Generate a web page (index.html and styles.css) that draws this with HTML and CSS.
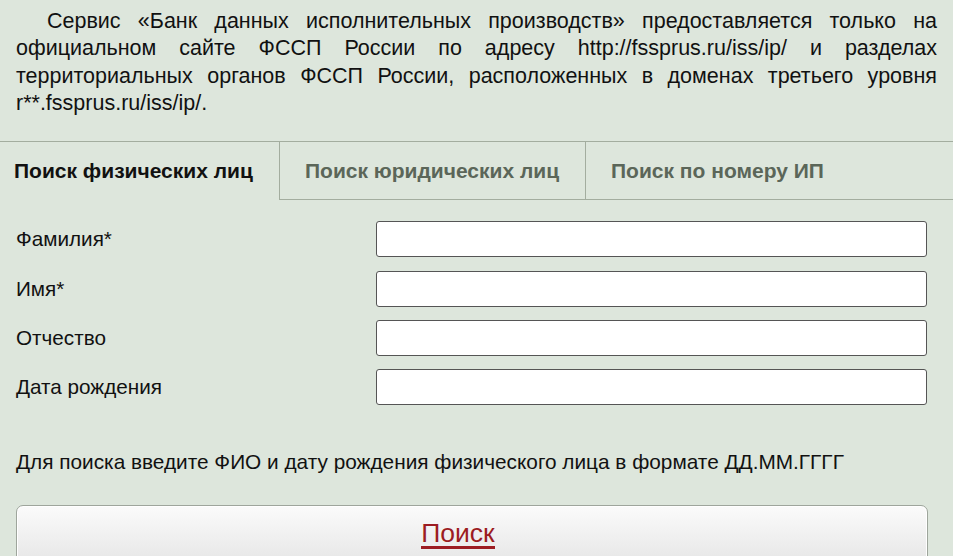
FILE: index.html
```html
<!DOCTYPE html>
<html lang="ru">
<head>
    <meta charset="UTF-8">
    <title>Банк данных исполнительных производств</title>
    <link rel="stylesheet" href="styles.css">
</head>
<body>
<div class="page">
    <p class="intro">Сервис «Банк данных исполнительных производств» предоставляется только на официальном сайте ФССП России по адресу http://fssprus.ru/iss/ip/ и разделах территориальных органов ФССП России, расположенных в доменах третьего уровня r**.fssprus.ru/iss/ip/.</p>

    <div class="tabs">
        <div class="tab active">Поиск физических лиц</div>
        <div class="tab">Поиск юридических лиц</div>
        <div class="tab last">Поиск по номеру ИП</div>
    </div>

    <form class="form" onsubmit="return false">
        <div class="row">
            <label for="lastName">Фамилия*</label>
            <input type="text" id="lastName">
        </div>
        <div class="row">
            <label for="firstName">Имя*</label>
            <input type="text" id="firstName">
        </div>
        <div class="row">
            <label for="middleName">Отчество</label>
            <input type="text" id="middleName">
        </div>
        <div class="row">
            <label for="birthDate">Дата рождения</label>
            <input type="text" id="birthDate">
        </div>

        <div class="hint">Для поиска введите ФИО и дату рождения физического лица в формате ДД.ММ.ГГГГ</div>

        <button class="submit"><span>Поиск</span></button>
    </form>
</div>
</body>
</html>
```

FILE: styles.css
```css
html, body {
    margin: 0;
    padding: 0;
}
body {
    font-family: "Liberation Sans", Arial, sans-serif;
    background-color: #dde6dc;
    color: #111;
    overflow: hidden;
    height: 556px;
}
.page {
    width: 953px;
}
.intro {
    margin: 0;
    padding: 8px 16px 0 16px;
    font-size: 21.5px;
    line-height: 27.3px;
    text-align: justify;
    text-indent: 31px;
}
.tabs {
    display: flex;
    margin-top: 24px;
    border-top: 1px solid #a3ad9f;
    height: 58px;
}
.tab {
    display: flex;
    align-items: center;
    box-sizing: border-box;
    font-size: 21px;
    font-weight: bold;
    color: #5b6659;
    padding: 0 25px;
    border-left: 1px solid #a3ad9f;
    border-bottom: 1px solid #a3ad9f;
    width: 306px;
}
.tab.active {
    color: #111;
    border-left: none;
    border-bottom: none;
    padding: 0 14px;
    width: 279px;
}
.tab.last {
    flex: 1;
}
.form {
    padding: 21px 26px 0 16px;
}
.row {
    display: flex;
    align-items: center;
    height: 36px;
    margin-bottom: 13.4px;
}
.row label {
    width: 360px;
    font-size: 20.7px;
}
.row input {
    flex: 1;
    height: 36px;
    box-sizing: border-box;
    border: 1px solid #555;
    border-radius: 3px;
    background: #fff;
    padding: 0 6px;
    font-size: 18px;
}
.hint {
    margin-top: 45px;
    font-size: 20.8px;
}
.submit {
    display: flex;
    justify-content: center;
    align-items: flex-start;
    width: 912px;
    margin-top: 31px;
    height: 60px;
    border: 1px solid #9ea59c;
    border-radius: 7px;
    background: linear-gradient(#fbfbfb, #e6e6e6);
    box-shadow: inset 0 0 0 1px #fff;
    padding: 14px 28px 0 0;
}
.submit span {
    font-family: "Liberation Sans", Arial, sans-serif;
    font-size: 26.5px;
    color: #9c1c22;
    border-bottom: 3px solid #9c1c22;
    line-height: 26px;
}
```
